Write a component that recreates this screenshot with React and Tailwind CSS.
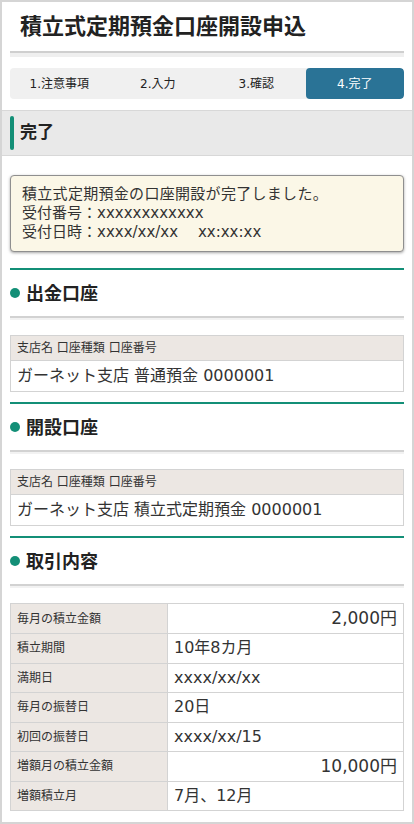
const steps = ['1.注意事項', '2.入力', '3.確認', '4.完了'];

const details = [
  { label: '毎月の積立金額', value: '2,000円', right: true },
  { label: '積立期間', value: '10年8カ月' },
  { label: '満期日', value: 'xxxx/xx/xx' },
  { label: '毎月の振替日', value: '20日' },
  { label: '初回の振替日', value: 'xxxx/xx/15' },
  { label: '増額月の積立金額', value: '10,000円', right: true },
  { label: '増額積立月', value: '7月、12月' },
];

const SectionHeading = ({ title }) => (
  <div className="mx-[8px]">
    <div className="h-[2px] bg-[#138f77]" />
    <div className="h-[46px] flex items-center gap-[6px]">
      <span className="w-[10px] h-[10px] rounded-full bg-[#138f77]" />
      <h3 className="text-[18px] font-bold text-[#222]">{title}</h3>
    </div>
    <div className="h-[4px] border-t-2 border-[#d2d2d2] bg-[#f2f2f2]" />
  </div>
);

const AccountTable = ({ value }) => (
  <div className="mx-[8px] mt-[15px] border border-[#d3d3d3]">
    <div className="h-[25px] flex items-center px-[6px] bg-[#ece7e3] text-[12px] text-[#333] border-b border-[#d3d3d3]">
      支店名 口座種類 口座番号
    </div>
    <div className="h-[30px] flex items-center px-[6px] text-[16px] text-[#333]">{value}</div>
  </div>
);

export default function App() {
  return (
    <div
      className="w-[414px] h-[824px] border-2 border-[#d5d5d5] bg-white overflow-hidden"
      style={{ fontFamily: '"DejaVu Sans", "Noto Sans CJK JP", sans-serif' }}
    >
      {/* page title */}
      <div className="h-[49px] flex items-center pl-[18px]">
        <h1 className="text-[22px] font-bold text-[#222] leading-none">積立式定期預金口座開設申込</h1>
      </div>
      <div className="mx-[8px] h-[6px] border-t-2 border-[#cfcfcf] bg-[#efefef]" />

      {/* steps */}
      <div className="mx-[8px] mt-[11px] h-[31px] flex rounded-[4px] bg-[#f0f0f0] overflow-hidden">
        {steps.map((s, i) => (
          <div
            key={s}
            className={
              i === 3
                ? 'flex-1 flex items-center justify-center text-[12px] bg-[#2a7396] text-white rounded-[4px]'
                : 'flex-1 flex items-center justify-center text-[12px] text-[#222]'
            }
          >
            {s}
          </div>
        ))}
      </div>

      {/* status band */}
      <div className="mt-[11px] h-[46px] flex items-center gap-[6px] pl-[8px] bg-[#e9e9e9] border-t border-b border-[#d8d8d8]">
        <span className="w-[4px] h-[34px] rounded-full bg-[#138f77]" />
        <h2 className="text-[17px] font-bold text-[#222]">完了</h2>
      </div>

      {/* message */}
      <div className="mx-[8px] mt-[19px] rounded-[4px] border border-[#8f8f8f] bg-[#fbf7e7] px-[11px] py-[9px] text-[15px] leading-[19px] text-[#333] shadow-[0_1px_3px_rgba(0,0,0,0.35)]">
        <p className="tracking-[0.3px]">積立式定期預金の口座開設が完了しました。</p>
        <p>受付番号：xxxxxxxxxxxx</p>
        <p>受付日時：xxxx/xx/xx　&nbsp;xx:xx:xx</p>
      </div>

      <div className="mt-[16px]">
        <SectionHeading title="出金口座" />
        <AccountTable value="ガーネット支店 普通預金 0000001" />
      </div>

      <div className="mt-[10px]">
        <SectionHeading title="開設口座" />
        <AccountTable value="ガーネット支店 積立式定期預金 0000001" />
      </div>

      <div className="mt-[10px]">
        <SectionHeading title="取引内容" />
        <div className="mx-[8px] mt-[15px] border border-[#d3d3d3]">
          {details.map((d, i) => (
            <div
              key={d.label}
              className={i === 0 ? 'flex h-[29px]' : 'flex h-[29.5px] border-t border-[#d3d3d3]'}
            >
              <div className="w-[157px] shrink-0 flex items-center px-[6px] bg-[#ece7e3] text-[12px] text-[#333] border-r border-[#d3d3d3]">
                {d.label}
              </div>
              <div
                className={
                  d.right
                    ? 'flex-1 flex items-center justify-end px-[6px] text-[17px] text-[#333]'
                    : 'flex-1 flex items-center px-[6px] text-[16px] text-[#333]'
                }
              >
                {d.value}
              </div>
            </div>
          ))}
        </div>
      </div>
    </div>
  );
}
